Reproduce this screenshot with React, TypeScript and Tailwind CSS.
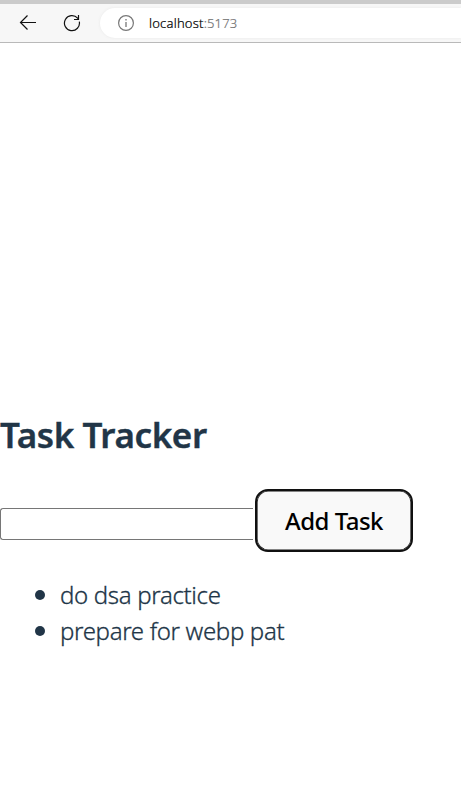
import React, { useState } from "react";

const initialTasks = ["do dsa practice", "prepare for webp pat"];

function BrowserBar() {
  return (
    <header className="flex h-[43px] w-full items-center border-t-4 border-b border-t-[#cbcbcb] border-b-[#b9b9b9] bg-[#f7f7f7]">
      <svg className="ml-[19px] h-[18px] w-[18px] shrink-0" viewBox="0 0 18 18" fill="none" stroke="#111" strokeWidth="1.2">
        <path d="M17 8.5H1.4M8.5 1.5l-7 7 7 7" />
      </svg>
      <svg className="ml-[26px] h-[18px] w-[18px] shrink-0" viewBox="0 0 18 18" fill="none" stroke="#111" strokeWidth="1.2">
        <path d="M16.3 7.6A7.5 7.5 0 1 1 14.6 4.2L15.4 5M15.5 1v4.5H11" />
      </svg>
      <div className="ml-[19px] flex h-[30px] flex-1 items-center rounded-l-full bg-white shadow-[0_0_3px_#e8e8e8]">
        <svg className="ml-[18px] h-4 w-4 shrink-0" viewBox="0 0 16 16" fill="none" stroke="#777">
          <circle cx="8" cy="8" r="7.4" strokeWidth="1.2" />
          <path d="M8 7v5M8 4v1.5" strokeWidth="1.3" />
        </svg>
        <span className="ml-[15px] text-[13px] leading-5 font-light tracking-[0.2px] text-black [-webkit-text-stroke:0.2px]">
          localhost<span className="text-[#737373]">:5173</span>
        </span>
      </div>
    </header>
  );
}

export default function App() {
  const [tasks, setTasks] = useState(initialTasks);
  const [draft, setDraft] = useState("");

  function addTask(event: React.FormEvent) {
    event.preventDefault();
    if (draft.trim()) {
      setTasks([...tasks, draft]);
      setDraft("");
    }
  }

  return (
    <div className="flex h-[790px] w-full flex-col overflow-hidden bg-white font-['Noto_Sans','Open_Sans',sans-serif] text-[#213547]">
      <BrowserBar />
      <main className="pt-[370px]">
        <h1 className="text-[35px] leading-[43px] font-semibold tracking-[-0.4px] [-webkit-text-stroke:0.4px]">Task Tracker</h1>
        <form onSubmit={addTask} className="mt-[33px] flex h-[63px] items-center">
          <input
            value={draft}
            onChange={(event) => setDraft(event.target.value)}
            className="mt-[7px] h-8 w-[253px] rounded-[3px] rounded-r-none border border-r-0 border-[#767676] bg-white px-1 outline-none"
          />
          <button className="ml-[2px] h-[63px] w-[158px] rounded-[13px] border-2 border-[#101010] bg-[#f9f9f9] text-[24px] leading-9 font-medium tracking-[-0.5px] text-black shadow-[inset_0_0_0_0.6px_#101010]">
            Add Task
          </button>
        </form>
        <ul className="mt-[25px] pl-[35px] text-[24px] leading-9 font-light tracking-[-0.33px] [-webkit-text-stroke:0.3px]">
          {tasks.map((task, index) => (
            <li key={index} className="flex items-center">
              <span className="mr-[15px] h-[10px] w-[10px] shrink-0 rounded-full bg-[#213547]" />
              {task}
            </li>
          ))}
        </ul>
      </main>
    </div>
  );
}
